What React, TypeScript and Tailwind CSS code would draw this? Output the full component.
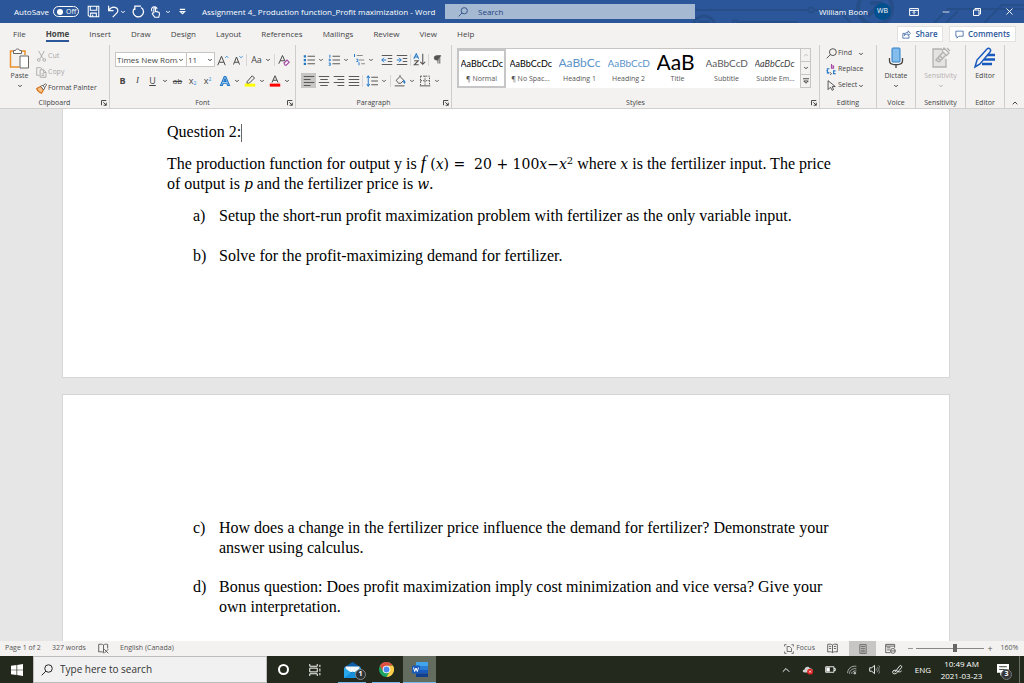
import type { ReactNode } from 'react'
import { ChevronDown, ChevronUp, Minus, Pilcrow, Search, X } from 'lucide-react'
import { clsx } from 'clsx'

const tabs = ['File', 'Home', 'Insert', 'Draw', 'Design', 'Layout', 'References', 'Mailings', 'Review', 'View', 'Help']

const styles = [
  { label: '¶ Normal', preview: 'AaBbCcDc', look: 'text-[9px] text-black' },
  { label: '¶ No Spac...', preview: 'AaBbCcDc', look: 'text-[9px] text-black' },
  { label: 'Heading 1', preview: 'AaBbCc', look: 'text-[12px] text-[#5b93c9]' },
  { label: 'Heading 2', preview: 'AaBbCcD', look: 'text-[10px] text-[#5b93c9]' },
  { label: 'Title', preview: 'AaB', look: 'pb-1 text-[21px] text-black' },
  { label: 'Subtitle', preview: 'AaBbCcD', look: 'text-[10px] text-[#5a5a5a]' },
  { label: 'Subtle Em...', preview: 'AaBbCcDc', look: 'text-[9px] italic text-[#404040]' },
]

interface SvgProps {
  children: ReactNode
  className?: string
  box?: string
}

function Svg({ children, className = 'size-3', box = '0 0 16 16' }: SvgProps) {
  return (
    <svg viewBox={box} className={clsx('shrink-0', className)} fill="none" stroke="currentColor" strokeWidth="1.3" aria-hidden="true">
      {children}
    </svg>
  )
}

function Chevron() {
  return <ChevronDown className="size-[6px] shrink-0" strokeWidth={4} />
}

function Magnifier({ className }: { className: string }) {
  return (
    <Svg className={className}>
      <circle cx="10" cy="6" r="5" />
      <path d="M6.500 9.500L1 15" />
    </Svg>
  )
}

function Tool({ label, children, className }: { label: string; children: ReactNode; className?: string }) {
  return (
    <button aria-label={label} className={clsx('flex h-[15px] w-[15px] shrink-0 items-center justify-center', className)}>
      {children}
    </button>
  )
}

function Drop({ label }: { label: string }) {
  return (
    <button aria-label={label} className="flex h-[15px] w-[10px] shrink-0 items-center justify-center">
      <Chevron />
    </button>
  )
}

function Divider() {
  return <span className="mx-px h-3 w-px shrink-0 bg-[#d8d6d4]" />
}

interface GroupProps {
  title: string
  className?: string
  launcher?: boolean
  children: ReactNode
}

function Group({ title, className, launcher, children }: GroupProps) {
  return (
    <section className={clsx('flex shrink-0 flex-col border-r border-[#cfcdcb]', className)}>
      <div className="flex-1">{children}</div>
      <div className="relative flex h-[10px] items-center justify-center text-[7px] text-[#444]">
        {title}
        {launcher && (
          <button aria-label={`${title} settings`} className="absolute right-[2px] top-[2px]">
            <Svg className="size-[6px]" box="0 0 8 8">
              <path d="M.7 7V.7H7M3 3l4 4M7 3.500V7H3.500" />
            </Svg>
          </button>
        )}
      </div>
    </section>
  )
}

function TitleBar() {
  return (
    <header className="relative flex h-[23px] shrink-0 items-center overflow-hidden bg-[#2b579a] text-[8px] text-white">
      <svg className="absolute right-0 top-0 h-[23px] w-[340px]" viewBox="0 0 340 23" fill="none" stroke="#264e89" strokeWidth="2" aria-hidden="true">
        <path d="M0 10h124M130 10h24l12 12M54 22h60M250 23l14-14h76M262 23l12-12M300 23l18-18h22" />
        <circle cx="127" cy="10" r="2.500" />
        <circle cx="20" cy="27" r="11" strokeWidth="3" />
        <path d="M14 22h12" strokeWidth="3" />
        <circle cx="51" cy="22" r="2" />
        <circle cx="191" cy="8" r="17" strokeWidth="4" />
        <path d="M184 16l13-13M186 3h11v11" strokeWidth="4" />
      </svg>
      <div className="relative flex w-[202px] shrink-0 items-center pl-[14px]">
        <label htmlFor="autosave">AutoSave</label>
        <span className="relative ml-1 flex h-[11px] w-[26px] items-center">
          <input
            id="autosave"
            type="checkbox"
            role="switch"
            className="absolute inset-0 appearance-none rounded-full border border-white"
          />
          <span className="ml-[4px] size-[6px] rounded-full bg-white" />
          <span className="ml-[3px] text-[7px] leading-none">Off</span>
        </span>
        <button aria-label="Save" className="ml-2">
          <Svg className="size-[13px]">
            <path d="M1.500 1.500h13v13h-11l-2-2zM4 1.500v5h8v-5M4.500 14.500v-4.500h7v4.500M7 12v2.500" />
          </Svg>
        </button>
        <button aria-label="Undo" className="ml-[7px]">
          <Svg className="size-[13px]">
            <path d="M2 1v6h6M2 7c2-3 5-5 8-4 4 1 4 5 2 7l-5 5" strokeWidth="1.500" />
          </Svg>
        </button>
        <Chevron />
        <button aria-label="Redo" className="ml-[6px]">
          <Svg className="size-[13px]">
            <path d="M11 1.500h-7.500v-1M3.500 2v4M3.500 4C0 7 1 12 5 14c5 2 10-2 9-7-.3-2-1-3-3-4" strokeWidth="1.500" />
          </Svg>
        </button>
        <button aria-label="Touch mode" className="ml-1">
          <Svg className="size-[13px]">
            <path d="M4 8a3.500 3.500 0 1 1 6-3M6 10V4.500c0-1.500 2-1.500 2 0V8l4 1c1 .5 1 1 1 2l-1 4H7l-3-4c0-1 1-1.500 2-1M8 8V6M10 8.500V7" />
          </Svg>
        </button>
        <span className="ml-[3px]"><Chevron /></span>
        <button aria-label="Customize toolbar" className="ml-2">
          <Svg className="size-[7px]" box="0 0 8 8">
            <path d="M1 1.500h6M1.500 4h5L4 6.500z" />
          </Svg>
        </button>
      </div>
      <h1 className="relative w-[243px] shrink-0 whitespace-nowrap">Assignment 4_ Production function_Profit maximization - Word</h1>
      <label className="relative flex h-[15px] w-[250px] shrink-0 items-center bg-[#a6b9d3] pl-[13px] text-[#1e4480]">
        <Magnifier className="size-[10px]" />
        <input aria-label="Search" placeholder="Search" className="ml-[10px] w-full bg-transparent outline-none placeholder:text-[#1e4480]" />
      </label>
      <div className="relative ml-auto flex items-center">
        <span>William Boon</span>
        <span className="ml-[6px] flex size-[17px] items-center justify-center rounded-full bg-[#03508f] text-[7px]">WB</span>
        <button aria-label="Ribbon display options" className="flex w-[46px] justify-center">
          <Svg className="size-[10px]">
            <path d="M1 2.500h14v11H1zM1 5.500h14M8 12V7.500M6 9l2-2 2 2" strokeWidth="1.600" />
          </Svg>
        </button>
        <button aria-label="Minimize" className="flex w-[18px] justify-center"><Minus className="size-[10px]" /></button>
        <button aria-label="Restore" className="flex w-[43px] justify-center">
          <Svg className="size-2">
            <path d="M1 4h11v11H1zM4 4V1h11v11h-3" strokeWidth="2" />
          </Svg>
        </button>
        <button aria-label="Close" className="mr-1 flex w-[22px] justify-center"><X className="size-[11px]" /></button>
      </div>
    </header>
  )
}

function TabBar() {
  return (
    <nav className="flex h-[22px] shrink-0 items-center pl-[13px] text-[8px] text-[#444]">
      <div className="flex gap-5">
        {tabs.map((tab) => (
          <button
            key={tab}
            className={clsx('h-4 border-b-2 pt-px', tab === 'Home' ? 'border-[#2b579a] font-bold' : 'border-transparent')}
          >
            {tab}
          </button>
        ))}
      </div>
      <div className="ml-auto flex gap-[6px] pr-2 text-[8px] font-semibold text-[#2b579a]">
        <button className="flex h-4 w-[46px] items-center justify-center gap-1 border border-[#e3e1df] bg-white">
          <Svg className="size-[9px]">
            <path d="M5 6H1.500v8.500h11V10M4 10c0-4 3-6 7-6V1.500L15 6l-4 4V7c-3 0-5 1-7 3z" />
          </Svg>
          Share
        </button>
        <button className="flex h-4 w-[67px] items-center justify-center gap-1 border border-[#e3e1df] bg-white">
          <Svg className="size-[9px]">
            <path d="M1.500 2h13v9H7l-3.500 3.500V11h-2z" />
          </Svg>
          Comments
        </button>
      </div>
    </nav>
  )
}

function ClipboardGroup() {
  return (
    <Group title="Clipboard" launcher className="w-[110px]">
      <div className="flex text-[7px]">
        <button className="flex w-9 flex-col items-center pl-[3px] pt-[3px] text-[#444]">
          <Svg className="size-[21px]" box="0 0 21 21">
            <path d="M4 3H1.500v16h9M13 3h3v4" stroke="#e8912d" strokeWidth="1.500" />
            <path d="M4.500 5.500V2.500h2c0-2 4-2 4 0h2v3z" fill="#fff" stroke="#666" strokeWidth="1" />
            <path d="M11 8h8.500v12H11z" fill="#fff" stroke="#666" strokeWidth="1" />
          </Svg>
          <span className="mt-[3px] h-[11px]">Paste</span>
          <Chevron />
        </button>
        <div className="flex flex-col items-start gap-[2px] pt-1">
          <button className="flex h-[14px] items-center gap-px text-[#a9a7a5]">
            <Svg className="size-[11px]">
              <path d="M4 0l6 11M12 0L6 11" />
              <circle cx="4" cy="13" r="2" />
              <circle cx="12" cy="13" r="2" />
            </Svg>
            Cut
          </button>
          <button className="flex h-[14px] items-center gap-px text-[#a9a7a5]">
            <Svg className="size-[11px]">
              <path d="M5 12H1V1h6l2 2M6 4h5l3.500 3.500V15H6zM11 4v4h3.500M8 10h4M8 12.500h4" />
            </Svg>
            Copy
          </button>
          <button className="flex h-[14px] items-center gap-px text-[#444]">
            <Svg className="size-[11px]">
              <path d="M1 8l6-3 4 5-3 5c-2-1-6-3-7-7z" fill="#f9c188" stroke="#d9731a" strokeWidth="1.600" />
              <path d="M7 5l2-2 4 4-2 3zM10 4l4-3 1.500 1.500-3 4" fill="#fff" stroke="#555" />
            </Svg>
            Format Painter
          </button>
        </div>
      </div>
    </Group>
  )
}

function FontGroup() {
  return (
    <Group title="Font" launcher className="w-[186px]">
      <div className="flex h-[22px] items-center pl-[5px] pt-[7px] text-[#444]">
        <div className="relative flex h-[15px] w-[72px] items-center border border-[#c8c6c4] bg-white">
          <select aria-label="Font name" className="w-[62px] appearance-none overflow-hidden text-clip pl-px text-[8px] outline-none">
            <option>Times New Roman</option>
          </select>
          <Chevron />
        </div>
        <div className="flex h-[15px] w-[28px] items-center border border-l-0 border-[#c8c6c4] bg-white">
          <select aria-label="Font size" className="w-5 appearance-none pl-px text-[8px] outline-none">
            <option>11</option>
          </select>
          <Chevron />
        </div>
        <Tool label="Grow font">
          <Svg>
            <path d="M1 15L6 3l5 12M3 11h6" />
            <path d="M11 5l2-2 2 2" stroke="#2b88d8" />
          </Svg>
        </Tool>
        <Tool label="Shrink font">
          <Svg>
            <path d="M2 14L6 4l4 10M3.500 11h5" />
            <path d="M10 3l2 2 2-2" stroke="#2b88d8" />
          </Svg>
        </Tool>
        <Divider />
        <Tool label="Change case"><span className="pl-[2px] text-[9px]">Aa</span></Tool>
        <Drop label="Case options" />
        <Divider />
        <Tool label="Clear formatting">
          <Svg>
            <path d="M1 13L6 2l3.500 8M3 9h5" />
            <path d="M8 12l4-4 3 3-4 4H9.500z" stroke="#a349a4" strokeWidth="1.500" />
          </Svg>
        </Tool>
      </div>
      <div className="flex h-[22px] items-center pl-[5px] pt-[5px] text-[9px] text-[#444]">
        <Tool label="Bold"><b>B</b></Tool>
        <Tool label="Italic"><i className="font-['Liberation_Serif',serif]">I</i></Tool>
        <Tool label="Underline"><span className="underline">U</span></Tool>
        <Drop label="Underline options" />
        <Tool label="Strikethrough"><span className="text-[8px] line-through">ab</span></Tool>
        <Tool label="Subscript"><span className="text-[9px]">x<sub className="text-[5px] text-[#2b88d8]">2</sub></span></Tool>
        <Tool label="Superscript"><span className="text-[9px]">x<sup className="text-[5px] text-[#2b88d8]">2</sup></span></Tool>
        <Tool label="Text effects" className="ml-[2px]">
          <Svg>
            <path d="M2 14L7 2h2l5 12h-2.500L10.500 11h-5L4.500 14zM6.500 8.500h3L8 5z" fill="#d6eaf8" stroke="#1f77c8" strokeWidth="1.500" />
          </Svg>
        </Tool>
        <Drop label="Text effect options" />
        <Tool label="Highlight">
          <Svg>
            <path d="M4 9l7-8 3 3-7 7H4z" />
            <path d="M1 13.500h14" stroke="#ff0" strokeWidth="4" />
          </Svg>
        </Tool>
        <Drop label="Highlight color" />
        <Tool label="Font color">
          <Svg>
            <path d="M4 10L8 1l4 9M5.500 7h5" />
            <path d="M1 13.500h14" stroke="#f00" strokeWidth="4" />
          </Svg>
        </Tool>
        <Drop label="Font colors" />
      </div>
    </Group>
  )
}

function ParagraphGroup() {
  return (
    <Group title="Paragraph" launcher className="w-[156px]">
      <div className="flex h-[22px] items-center pl-[5px] pt-[7px] text-[#555]">
        <Tool label="Bullets">
          <Svg>
            <path d="M6 3h10M6 8h10M6 13h10" />
            <path d="M1 3h3M1 8h3M1 13h3" stroke="#1f77c8" strokeWidth="3" />
          </Svg>
        </Tool>
        <Drop label="Bullet styles" />
        <Tool label="Numbering">
          <Svg>
            <path d="M6 3h10M6 8h10M6 13h10" />
            <path d="M2.500 1v4M1 7h2v2H1M1 12h2v3H1" stroke="#1f77c8" />
          </Svg>
        </Tool>
        <Drop label="Number styles" />
        <Tool label="Multilevel list">
          <Svg>
            <path d="M5 2h8M8 8h7M11 13h5" stroke="#888" />
            <path d="M2 0v4M4.500 7h2v3h-2M8 11v4" stroke="#1f77c8" />
          </Svg>
        </Tool>
        <Drop label="List levels" />
        <Tool label="Decrease indent" className="ml-[3px]">
          <Svg>
            <path d="M1 2h14M9 6h6M9 10h6M1 14h14" />
            <path d="M7 8H1M4 5L1 8l3 3" stroke="#1f77c8" />
          </Svg>
        </Tool>
        <Tool label="Increase indent">
          <Svg>
            <path d="M1 2h14M9 6h6M9 10h6M1 14h14" />
            <path d="M1 8h6M4 5l3 3-3 3" stroke="#1f77c8" />
          </Svg>
        </Tool>
        <Divider />
        <Tool label="Sort">
          <Svg className="size-[13px]">
            <path d="M1 7l3-6 3 6M2 5h4" stroke="#1f77c8" />
            <path d="M1.500 9.500h5l-5 5h5.500M12 1v13M9 11l3 3 3-3" />
          </Svg>
        </Tool>
        <Divider />
        <Tool label="Show marks"><Pilcrow className="size-[11px]" fill="currentColor" /></Tool>
      </div>
      <div className="flex h-[22px] items-center pl-[5px] pt-[5px] text-[#555]">
        <Tool label="Align left" className="bg-[#c8c6c4]">
          <Svg><path d="M1 2h14M1 6h9M1 10h14M1 14h9" /></Svg>
        </Tool>
        <Tool label="Center">
          <Svg><path d="M1 2h14M3 6h10M1 10h14M3 14h10" /></Svg>
        </Tool>
        <Tool label="Align right">
          <Svg><path d="M1 2h14M6 6h9M1 10h14M6 14h9" /></Svg>
        </Tool>
        <Tool label="Justify">
          <Svg><path d="M1 2h14M1 6h14M1 10h14M1 14h14" /></Svg>
        </Tool>
        <Divider />
        <Tool label="Line spacing">
          <Svg>
            <path d="M7 3h9M7 8h9M7 13h9" />
            <path d="M3 1v14M1 4l2-3 2 3M1 12l2 3 2-3" stroke="#1f77c8" />
          </Svg>
        </Tool>
        <Drop label="Spacing options" />
        <Divider />
        <Tool label="Shading">
          <Svg>
            <path d="M3 7l5-5 5 5-4 4H6zM8 2V0M1 14.500h13" />
            <path d="M13 7c2 2 2 4 1 4s-1-2-1-4z" stroke="#1f77c8" fill="#1f77c8" />
          </Svg>
        </Tool>
        <Drop label="Shading color" />
        <Tool label="Borders">
          <Svg>
            <path d="M2 1.500h12v12M2 1.500v12M8 1v12M2 7.500h12" strokeDasharray="2 1.500" />
            <path d="M1 14.500h14" />
          </Svg>
        </Tool>
        <Drop label="Border styles" />
      </div>
    </Group>
  )
}

function StylesGroup() {
  return (
    <Group title="Styles" launcher className="w-[368px]">
      <div className="ml-[5px] mt-[3px] flex h-10 w-[354px] border-t border-[#c8c6c4] bg-white">
        {styles.map((style, i) => (
          <button
            key={style.label}
            className={clsx(
              'flex w-[49px] flex-col items-center overflow-hidden whitespace-nowrap text-[7px] text-[#555]',
              i === 0 && 'outline-2 -outline-offset-2 outline-[#c6c6c6]',
            )}
          >
            <span className={clsx("mx-1 mt-1 flex h-5 w-[42px] items-center overflow-hidden font-['Lato',sans-serif] leading-none", style.look)}>
              {style.preview}
            </span>
            <span className="mt-[2px]">{style.label}</span>
          </button>
        ))}
        <div className="flex w-[11px] flex-col divide-y divide-[#c8c6c4] border-x border-b border-[#c8c6c4] bg-[#f3f2f1] text-[#444]">
          <button aria-label="Previous styles" className="flex flex-1 items-center justify-center text-[#b0aeac]">
            <ChevronUp className="size-[6px]" strokeWidth={3} />
          </button>
          <button aria-label="Next styles" className="flex flex-1 items-center justify-center"><Chevron /></button>
          <button aria-label="All styles" className="flex flex-1 items-center justify-center">
            <Svg className="size-[6px]" box="0 0 8 8"><path d="M0 1h8M1 4h6L4 7z" /></Svg>
          </button>
        </div>
      </div>
    </Group>
  )
}

function EditingGroup() {
  return (
    <Group title="Editing" className="w-[57px]">
      <div className="flex flex-col items-start gap-px pl-[6px] pt-px text-[7px] text-[#444]">
        <button className="flex h-[15px] items-center gap-px">
          <Magnifier className="size-[11px]" />
          Find
          <span className="ml-[5px]"><Chevron /></span>
        </button>
        <button className="flex h-[15px] items-center gap-px">
          <Svg className="size-[11px]">
            <path d="M8 0v6h3V3H8" stroke="#a349a4" strokeWidth="1.600" />
            <path d="M5 7H2v6h3M1 9l3 5M14 10h-3v4h3" stroke="#1f77c8" strokeWidth="1.600" />
            <path d="M6 12l2 2-2 2" />
          </Svg>
          Replace
        </button>
        <button className="flex h-[15px] items-center gap-px">
          <Svg className="size-[11px]"><path d="M3 1v13l3.500-3.500L9 15l2-1-2-4.500h4.500z" /></Svg>
          Select
          <Chevron />
        </button>
      </div>
    </Group>
  )
}

function BigButton({ label, icon, drop, disabled }: { label: string; icon: ReactNode; drop?: boolean; disabled?: boolean }) {
  return (
    <button disabled={disabled} className={clsx('flex w-full flex-col items-center pt-[2px] text-[7px]', disabled ? 'text-[#b3b1af]' : 'text-[#444]')}>
      {icon}
      <span className="mt-[3px] h-[11px]">{label}</span>
      {drop && <Chevron />}
    </button>
  )
}

function Ribbon() {
  return (
    <div className="flex h-[64px] shrink-0 border-b border-[#d2d0ce]">
      <ClipboardGroup />
      <FontGroup />
      <ParagraphGroup />
      <StylesGroup />
      <EditingGroup />
      <Group title="Voice" className="w-[39px]">
        <BigButton
          label="Dictate"
          drop
          icon={
            <Svg className="size-[22px]" box="0 0 22 22">
              <path d="M4.500 11v3c0 5 13 5 13 0v-3M11 18v3" />
              <rect x="7" y="1" width="8" height="14" rx="1" fill="#83bdec" stroke="#2b7cc7" strokeWidth="1" />
            </Svg>
          }
        />
      </Group>
      <Group title="Sensitivity" className="w-[50px]">
        <BigButton
          label="Sensitivity"
          drop
          disabled
          icon={
            <Svg className="size-[22px]" box="0 0 22 22">
              <path d="M12 2H3v18h13v-8" fill="#e4e3e2" />
              <path d="M6 13l7-8 3 3-7 7zM12 4l2-3 5 5-3 3M17 1l3 3M8 11l3 3M10 9l3 3" />
            </Svg>
          }
        />
      </Group>
      <Group title="Editor" className="w-[39px]">
        <BigButton
          label="Editor"
          icon={
            <Svg className="size-[22px]" box="0 0 22 22">
              <path d="M12 8h9M10 12.500h11M8 17h10" stroke="#185abd" strokeWidth="2.500" />
              <path d="M1 20l2-7L13 2c2-2 5 1 3 3L6 17z" stroke="#185abd" fill="#f3f2f1" strokeWidth="1.500" />
            </Svg>
          }
        />
      </Group>
      <button aria-label="Collapse ribbon" className="flex flex-1 items-end justify-center pb-px text-[#444]">
        <ChevronUp className="size-2" strokeWidth={3} />
      </button>
    </div>
  )
}

function Item({ mark, children }: { mark: string; children: ReactNode }) {
  return (
    <li className="flex">
      <span className="w-[26px] shrink-0">{mark}</span>
      <span>{children}</span>
    </li>
  )
}

function Var({ children }: { children: ReactNode }) {
  return <i className="font-['DejaVu_Serif',serif] text-[14px] leading-none">{children}</i>
}

function DocumentArea() {
  return (
    <main className="flex flex-1 flex-col items-center gap-4 overflow-hidden bg-[#e6e6e6] pr-3 font-['Liberation_Serif',serif] text-[16px] leading-5 text-black">
      <article className="h-[269px] w-full max-w-[888px] shrink-0 border border-t-0 border-[#d6d6d6] bg-white px-[104px] pt-[13px]">
        <h2>
          Question 2:<span className="inline-block h-[18px] w-px bg-[#666] align-middle" />
        </h2>
        <p className="mt-3 whitespace-nowrap">
          The production function for output y is{' '}
          <span className="font-['DejaVu_Serif',serif] text-[14px] leading-none">
            <i className="font-['Liberation_Serif',serif] text-[18px] leading-none">f</i> (<Var>x</Var>) =&nbsp; 20 + 100<Var>x</Var>−<Var>x</Var>
            <sup className="text-[10px]">2</sup>
          </span>{' '}
          where <Var>x</Var> is the fertilizer input. The price
          <br />
          of output is <Var>p</Var> and the fertilizer price is <Var>w</Var>.
        </p>
        <ol className="mt-3 flex flex-col gap-5 pl-[26px]">
          <Item mark="a)">Setup the short-run profit maximization problem with fertilizer as the only variable input.</Item>
          <Item mark="b)">Solve for the profit-maximizing demand for fertilizer.</Item>
        </ol>
      </article>
      <article className="w-full max-w-[888px] flex-1 border border-b-0 border-[#d6d6d6] bg-white px-[104px] pt-[123px]">
        <ol className="flex flex-col gap-[19px] pl-[26px]">
          <Item mark="c)">
            How does a change in the fertilizer price influence the demand for fertilizer? Demonstrate your
            <br />
            answer using calculus.
          </Item>
          <Item mark="d)">
            Bonus question: Does profit maximization imply cost minimization and vice versa? Give your
            <br />
            own interpretation.
          </Item>
        </ol>
      </article>
    </main>
  )
}

function StatusBar() {
  return (
    <footer className="flex h-[15px] shrink-0 items-center bg-[#f3f2f1] text-[7px] text-[#555]">
      <span className="w-[47px] pl-[5px]">Page 1 of 2</span>
      <span className="w-[51px] pl-[5px]">327 words</span>
      <button aria-label="Proofing" className="w-[22px]">
        <Svg className="size-[11px]"><path d="M8 3v11M8 3C6 1.500 4 1.500 1 2v11c3-.5 5-.5 7 1M8 3c2-1.500 4-1.500 6-1v6M9 9l6 6M15 9l-6 6" /></Svg>
      </button>
      <span>English (Canada)</span>
      <div className="ml-auto flex h-full items-center">
        <button className="flex items-center gap-[2px]">
          <Svg className="size-[10px]"><path d="M4 1H1v3M12 1h3v3M4 15H1v-3M12 15h3v-3M5 4h4l3 3v5H5z" /></Svg>
          Focus
        </button>
        <button aria-label="Read mode" className="flex w-[34px] justify-center">
          <Svg className="size-[11px]"><path d="M8 3v11M8 3C6 1.500 4 1.500 1 2v11c3-.5 5-.5 7 1 2-1.500 4-1.500 7-1V2c-3-.5-5-.5-7 1M3 5h3M3 8h3M10 5h3M10 8h3" /></Svg>
        </button>
        <button aria-label="Print layout" className="flex h-full w-[27px] items-center justify-center bg-[#c8c6c4]">
          <Svg className="size-[10px]"><path d="M3 1h10v14H3zM5 4h6M5 7h6M5 10h6M5 12.500h6" /></Svg>
        </button>
        <button aria-label="Web layout" className="flex w-[28px] justify-center">
          <Svg className="size-[11px]"><path d="M8 14H1V2h13v5M1 4.500h13M3 7h5M3 10h4" /><circle cx="11.500" cy="11.500" r="3.500" /><path d="M8 11.500h7" /></Svg>
        </button>
        <button aria-label="Zoom out" className="flex w-3 justify-center"><Minus className="size-[7px]" /></button>
        <input
          type="range"
          aria-label="Zoom"
          min={10}
          max={500}
          defaultValue={290}
          className="h-3 w-[68px] appearance-none bg-transparent [&::-webkit-slider-runnable-track]:h-px [&::-webkit-slider-runnable-track]:bg-[#8a8886] [&::-webkit-slider-thumb]:-mt-1 [&::-webkit-slider-thumb]:h-2 [&::-webkit-slider-thumb]:w-1 [&::-webkit-slider-thumb]:appearance-none [&::-webkit-slider-thumb]:bg-[#666]"
        />
        <button aria-label="Zoom in" className="flex w-[12px] justify-center text-[9px]">+</button>
        <span className="w-7 pr-px text-center">160%</span>
      </div>
    </footer>
  )
}

function Taskbar() {
  return (
    <div className="flex h-[27px] shrink-0 items-center bg-[#232a1d] text-white">
      <button aria-label="Start" className="flex w-[33px] justify-center">
        <svg viewBox="0 0 12 12" className="size-3" fill="#fff" aria-hidden="true">
          <path d="M0 1.700L5.500 1v4.700H0zM6.200.9L12 0v5.700H6.200zM0 6.300h5.500V11L0 10.300zM6.200 6.300H12V12l-5.800-.9z" />
        </svg>
      </button>
      <label className="flex h-full w-[234px] shrink-0 items-center border border-[#bdbdbd] bg-[#f1f1f1] pl-[7px] text-[#222]">
        <Magnifier className="size-3" />
        <input
          aria-label="Type here to search"
          placeholder="Type here to search"
          className="ml-[7px] w-full bg-transparent text-[10px] outline-none placeholder:text-[#333]"
        />
      </label>
      <button aria-label="Cortana" className="flex w-8 justify-center">
        <span className="size-[11px] rounded-full border-2 border-white" />
      </button>
      <button aria-label="Task view" className="flex w-8 justify-center">
        <Svg className="size-3">
          <path d="M1 0v3h10V0M1 5.500h10v5H1zM1 16v-3h10v3M14.500 1v3M14.500 6v4M14.500 12v3" />
        </Svg>
      </button>
      <button aria-label="Mail" className="relative ml-1 flex h-full w-[34px] items-center justify-center">
        <svg viewBox="0 0 17 16" className="h-4 w-[17px]" aria-hidden="true">
          <path d="M0 5.500L8.500 0 17 5.500V8H0z" fill="#0d5ea8" />
          <path d="M1.500 4.500h14V10h-14z" fill="#f4f8fb" />
          <path d="M0 5.500l8.500 6L17 5.500V16H0z" fill="#28a8ea" />
          <path d="M0 16l8.500-6.500L17 16z" fill="#1490df" />
        </svg>
        <span className="absolute bottom-[3px] right-[3px] flex size-[11px] items-center justify-center rounded-full border border-[#888] bg-[#2c3235] text-[7px] font-bold">1</span>
        <span className="absolute inset-x-[3px] bottom-0 h-px bg-[#76b9ed]" />
      </button>
      <button aria-label="Chrome" className="relative flex h-full w-[34px] items-center justify-center">
        <svg viewBox="0 0 16 16" className="size-[15px]" aria-hidden="true">
          <circle cx="8" cy="8" r="8" fill="#1da462" />
          <path d="M1.070 4A8 8 0 0 1 14.930 4H8z" fill="#dd5144" />
          <path d="M1.070 4A8 8 0 0 1 8 0v4L4.540 10z" fill="#dd5144" />
          <path d="M8 4h6.930A8 8 0 0 1 8 16l3.460-6z" fill="#ffcd46" />
          <circle cx="8" cy="8" r="4" fill="#fff" />
          <circle cx="8" cy="8" r="3.100" fill="#4a8af4" />
        </svg>
        <span className="absolute inset-x-[3px] bottom-0 h-px bg-[#76b9ed]" />
      </button>
      <button aria-label="Word" className="relative flex h-full w-[33px] items-center justify-center bg-[#646b5f]">
        <svg viewBox="0 0 16 15" className="h-[15px] w-4" aria-hidden="true">
          <path d="M4 0h12v4H4z" fill="#41a5ee" />
          <path d="M4 4h12v4H4z" fill="#2b7cd3" />
          <path d="M4 8h12v3.500H4z" fill="#185abd" />
          <path d="M4 11.500h12V15H4z" fill="#103f91" />
          <rect y="3.500" width="8" height="8" rx="1" fill="#185abd" />
          <path d="M1.500 5.500l1.200 4L4 6l1.300 3.500 1.200-4" fill="none" stroke="#fff" />
        </svg>
        <span className="absolute inset-x-0 bottom-0 h-px bg-[#76b9ed]" />
      </button>
      <div className="ml-auto flex h-full items-center text-[8px]">
        <button aria-label="Hidden icons" className="flex w-[22px] justify-center"><ChevronUp className="size-3" /></button>
        <button aria-label="OneDrive" className="flex w-[22px] justify-center">
          <svg viewBox="0 0 14 12" className="h-[10px] w-3" aria-hidden="true">
            <path d="M3 9C0 9 0 5.500 3 5.500 3 2 8 1 9 4c4-1 5 5 2 5z" fill="#d0d0d0" />
            <circle cx="9.500" cy="8" r="3.500" fill="#e02020" />
            <path d="M8.300 6.800l2.400 2.400M10.700 6.800L8.300 9.200" stroke="#fff" />
          </svg>
        </button>
        <button aria-label="Battery" className="flex w-[22px] justify-center">
          <Svg className="size-[11px]"><path d="M1 4h12v8H1zM13 6.500h2v3h-2" /><path d="M2 8h5" strokeWidth="6" stroke="#fff" /></Svg>
        </button>
        <button aria-label="Network" className="flex w-[22px] justify-center">
          <Svg className="size-[10px] text-[#c8c8c8]"><path d="M1 13C1 6 7 1 15 2M4 14c0-5 4-9 11-8M7.500 14c0-3 3-5 7.500-4.500" /><circle cx="12.500" cy="13" r="1.500" fill="currentColor" /></Svg>
        </button>
        <button aria-label="Volume" className="flex w-[22px] justify-center">
          <Svg className="size-[11px]"><path d="M1 5.500h3L8 2v12l-4-3.500H1z" /><path d="M10 6c1 1 1 3 0 4M12 4c2 2 2 6 0 8M14 2c3 3 3 9 0 12" stroke="#999" /></Svg>
        </button>
        <button aria-label="Pen" className="flex w-6 justify-center">
          <Svg className="size-[11px]"><path d="M4 12l7-9c1-2 4 0 3 2L8 12c-3 3-7 3-7 0s3-4 6-2 5 2 7 0" /></Svg>
        </button>
        <span className="w-7 text-center">ENG</span>
        <time className="flex w-[49px] flex-col items-center whitespace-nowrap leading-3">
          <span>10:49 AM</span>
          <span>2021-03-23</span>
        </time>
        <button aria-label="Notifications" className="relative flex h-full w-[33px] items-center justify-center">
          <svg viewBox="0 0 11 11" className="size-3" fill="#fff" aria-hidden="true">
            <path d="M0 0h11v8H5L3 11V8H0z" />
            <path d="M2 2.500h7M2 5h7" stroke="#232a1d" strokeWidth=".8" />
          </svg>
          <span className="absolute bottom-[3px] right-[7px] flex size-[11px] items-center justify-center rounded-full border border-[#777] bg-[#34383a] text-[7px] font-bold">3</span>
        </button>
        <span className="mr-1 h-full w-px bg-[#6b7066]" />
      </div>
    </div>
  )
}

export default function App() {
  return (
    <div className="flex h-screen flex-col overflow-hidden bg-[#f3f2f1] font-['Open_Sans',sans-serif] leading-tight">
      <TitleBar />
      <TabBar />
      <Ribbon />
      <DocumentArea />
      <StatusBar />
      <Taskbar />
    </div>
  )
}
